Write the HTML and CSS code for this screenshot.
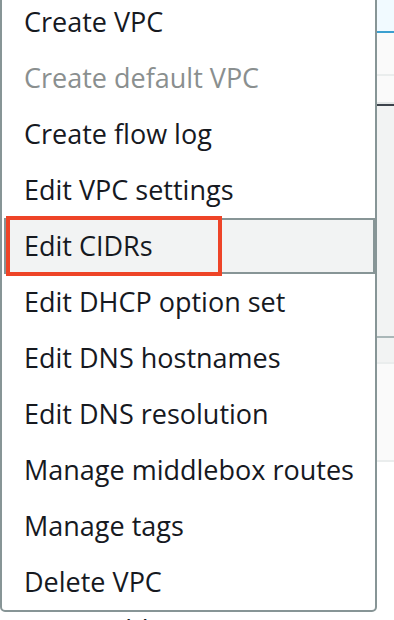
FILE: index.html
```html
<!DOCTYPE html>
<html lang="en">
<head>
  <meta charset="UTF-8" />
  <meta name="viewport" content="width=device-width, initial-scale=1.0"/>
  <title>VPC Actions</title>
  <link rel="stylesheet" href="styles.css">
</head>
<body>
  <div class="page">
    <div class="page-header"></div>
    <div class="tabs-row"></div>
    <div class="filter-row"></div>
    <div class="table-head"></div>
    <div class="table-sub"></div>
    <div class="table-row"></div>
    <div class="details">
      <div class="details-text">route table</div>
    </div>

    <ul class="menu">
      <li class="item">Create VPC</li>
      <li class="item disabled">Create default VPC</li>
      <li class="item">Create flow log</li>
      <li class="item">Edit VPC settings</li>
      <li class="item active">Edit CIDRs<span class="mark"></span></li>
      <li class="item">Edit DHCP option set</li>
      <li class="item">Edit DNS hostnames</li>
      <li class="item">Edit DNS resolution</li>
      <li class="item">Manage middlebox routes</li>
      <li class="item">Manage tags</li>
      <li class="item">Delete VPC</li>
    </ul>
  </div>
</body>
</html>
```

FILE: styles.css
```css
body { margin: 0; background: #fff; font-family: "Open Sans", "Noto Sans", sans-serif; color: #16191f; }
.page { position: relative; width: 394px; height: 620px; overflow: hidden; }

/* page behind the dropdown */
.page-header { height: 31px; background: #f1faff; border-bottom: 2px solid #3b9fcf; }
.tabs-row { height: 41px; background: #fafafa; border-bottom: 2px solid #eaeded; }
.filter-row { height: 26px; background: #fafafa; border-bottom: 2px solid #e4e7e7; }
.table-head { height: 230px; background: #f2f3f3; border-top: 2px solid #3c434b; border-bottom: 2px solid #aab7b8; }
.table-sub { height: 24px; background: #f2f3f3; border-bottom: 2px solid #eaeded; }
.table-row { height: 96px; background: #fafafa; border-bottom: 2px solid #eaeded; }
.details { padding-top: 148px; }
.details-text { padding-left: 25px; font-size: 27px; line-height: 40px; }

/* actions dropdown */
.menu { position: absolute; top: -8px; left: 0; width: 371px; margin: 0; padding: 0 0 0 2px; list-style: none; background: #fff; border: 2px solid #879596; border-radius: 0 0 5px 5px; }
.item { position: relative; height: 52px; padding: 0 18px; border: 2px solid transparent; font-size: 27px; line-height: 52px; white-space: nowrap; }
.item.disabled { color: #8a8f8f; }
.item.active { background: #f2f3f3; border-color: #879596; }
.mark { position: absolute; top: -4px; left: 0; width: 208px; height: 52px; border: 4px solid #ee4427; }
```
